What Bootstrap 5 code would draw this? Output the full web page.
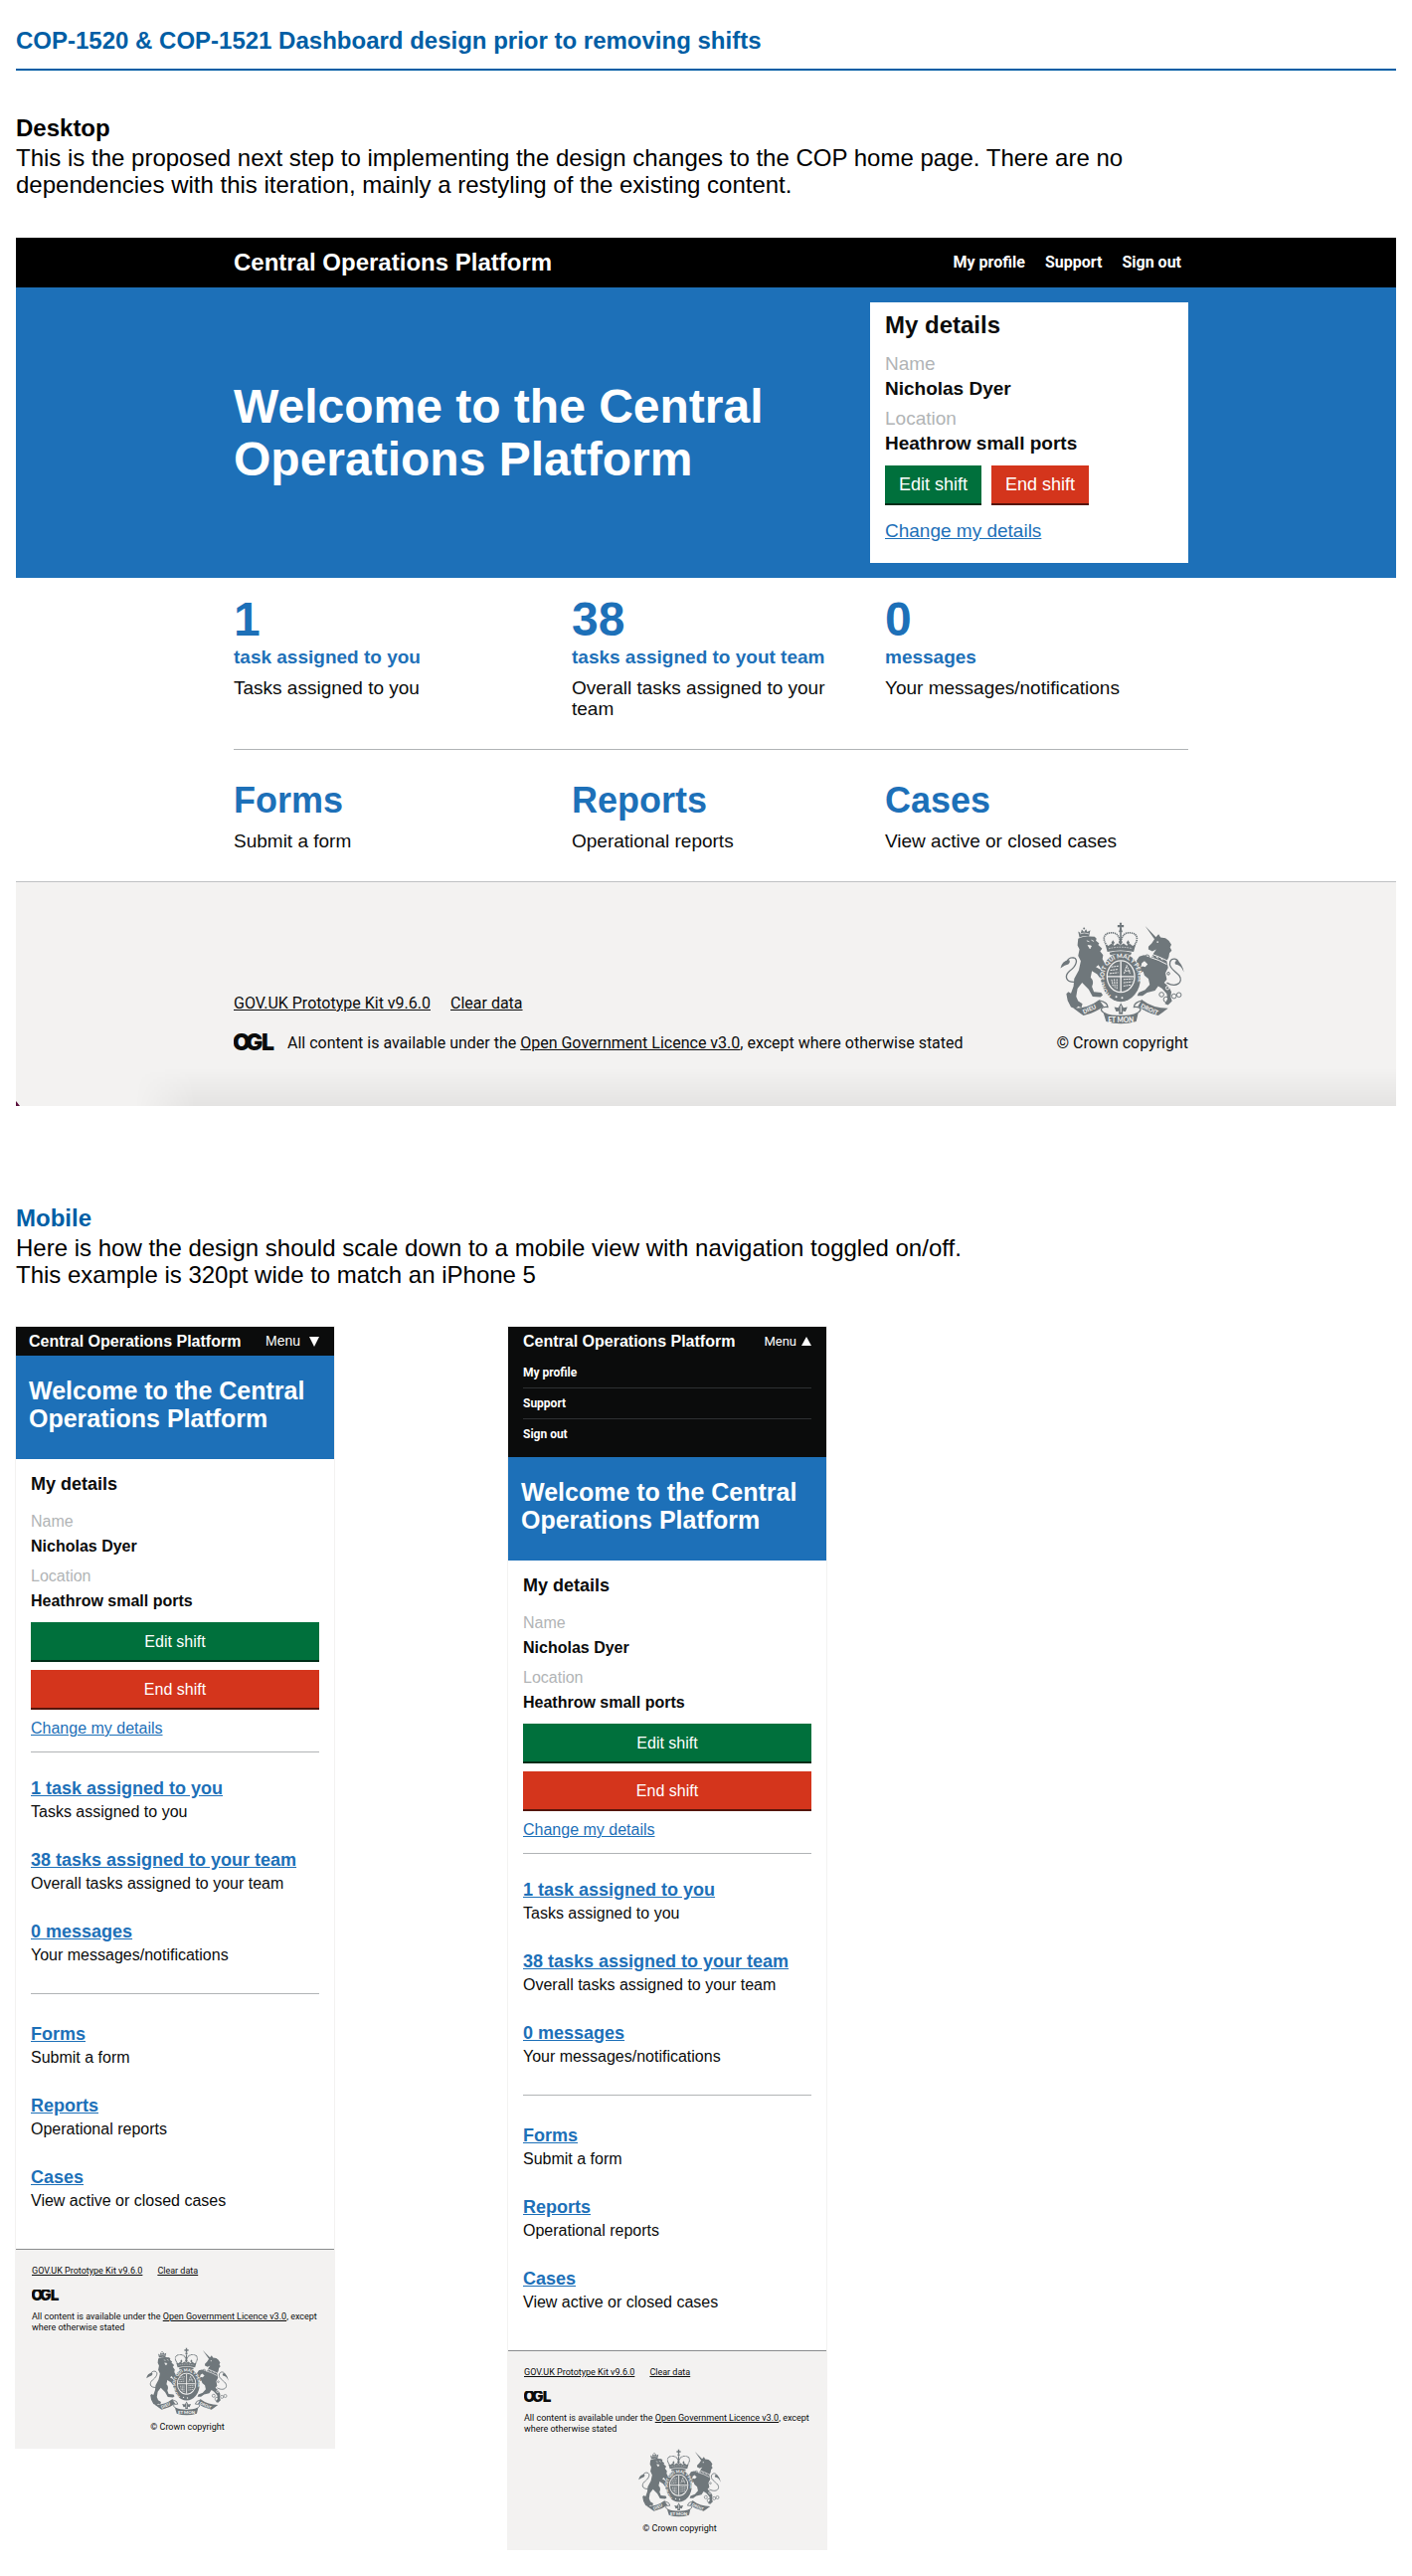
<!DOCTYPE html>
<html lang="en">
<head>
<meta charset="utf-8">
<meta name="viewport" content="width=device-width, initial-scale=1">
<title>Dashboard design</title>
<link href="https://cdn.jsdelivr.net/npm/bootstrap@5.3.0/dist/css/bootstrap.min.css" rel="stylesheet">
<style>
body{font-family:"Liberation Sans",Arial,sans-serif;color:#000;background:#fff}
h1,h2,h3,p,dl,dd,dt,ul{margin:0;font-weight:400}
.page{padding:25px 16px 26px}
.page-title,.sec-title{font-size:24px;line-height:32px;font-weight:700}
.page-title{color:#005ea5;padding-bottom:12px;border-bottom:2px solid #005ea5}
.brand-blue{color:#005ea5}
.intro{font-size:24px;line-height:27px;max-width:1200px}
.desk-sec{margin-top:42px}
.mob-sec{margin-top:97px}
a{color:#1d70b8}
.transport{font-family:Roboto,"Noto Sans",sans-serif}

/* desktop view */
.desk{margin-top:40px;color:#0b0c0c}
.desk-in{padding-left:10px}
.desk-wrap{max-width:960px;margin:0 auto}
.desk-head{background:#000;height:50px}
.desk-brand{font-size:24px;line-height:50px;font-weight:700;color:#fff;text-decoration:none}
.desk-nav{gap:20px;padding-right:7px;font-size:16px;font-weight:700;line-height:50px}
.desk-nav a,.mob-nav a{color:#fff;text-decoration:none}
.hero{background:#1d70b8;padding-top:15px;padding-bottom:15px}
.hero-h{font-size:48px;line-height:53px;font-weight:700;color:#fff}
.panel{background:#fff;width:320px;padding:8px 15px 20px}
.panel-h{font-size:24px;line-height:30px;font-weight:700;margin-bottom:11px}
.facts{font-size:19px;line-height:25px}
.facts dt{color:#b1b4b6}
.facts dd{font-weight:700}
.facts dd+dt{margin-top:5px}
.shift{border:0;border-bottom:2px solid;border-radius:0;height:40px;padding:0 14px;color:#fff;font-size:18px;line-height:38px;text-align:center}
.shift-edit{background:#00703c;border-color:#002d18}
.shift-end{background:#d4351c;border-color:#55150b}
.panel .acts{gap:10px;margin:10px 0 13px}
.change{font-size:19px;line-height:25px;display:block}
.tri{display:grid;grid-template-columns:340fr 315fr 305fr}
.tri>div{padding-right:30px}
.tri a{text-decoration:none;font-weight:700;display:block}
.stats{padding:16px 0 30px;border-bottom:1px solid #b1b4b6}
.big{font-size:48px;line-height:52px;display:block}
.lbl{font-size:19px;line-height:24px;display:block}
.desc{font-size:19px;line-height:21px}
.stats .desc{margin-top:8px}
.areas{padding:31px 0 30px}
.areas a{font-size:36px;line-height:40px}
.areas .desc{margin-top:10px}
.foot{background:#f3f2f1;border-top:1px solid #bfc1c3;position:relative}
.foot a{color:#0b0c0c}
.desk-foot{padding-top:40px;padding-bottom:53px;font-size:16px;line-height:20px}
.desk-foot::after{content:"";position:absolute;left:120px;right:0;bottom:0;height:38px;background:linear-gradient(to top,rgba(0,0,0,.06),transparent);-webkit-mask-image:linear-gradient(to right,transparent,#000 60px);mask-image:linear-gradient(to right,transparent,#000 60px)}
.desk-foot .metas{gap:20px;margin-bottom:20px}
.licence{gap:12px}
.ogl{display:block;flex:none}
.desk-foot .ogl{width:42px;height:18px}
.crest{display:block}
.desk-foot .crest{width:125px;height:103px;margin:0 auto 9px}
.speck{position:absolute;left:0;bottom:0;width:4px;height:5px;background:#5a0f3c;clip-path:polygon(0 0,100% 100%,0 100%)}

/* mobile views */
.phones{gap:173px;margin-top:38px}
.phone{width:322px;border:1px solid #f3f2f1;color:#0b0c0c;margin-left:-1px}
.phone+.phone{margin-left:0}
.mob-head{background:#0b0c0c;color:#fff}
.mob-bar{height:29px}
.mob-brand{font-size:16px;line-height:29px;font-weight:700;color:#fff;text-decoration:none}
.menu-btn{background:none;border:0;color:#fff;padding:0;font-size:14px;line-height:29px;display:flex;align-items:center}
.head-shut{padding:0 15px 0 13px}
.head-shut .menu-btn{gap:9px}
.head-open{padding:0 15px 8px}
.head-open .menu-btn{gap:5px;font-size:13px}
.mob-nav{padding-top:2px;font-size:12px;line-height:30px;font-weight:700}
.mob-nav li+li{border-top:1px solid #2e3133}
.mob-hero{background:#1d70b8;color:#fff;padding:21px 13px 27px}
.mob-hero-h{font-size:25px;line-height:28px;font-weight:700}
.mob-body{padding:12px 15px 36px}
.mob-h{font-size:18px;line-height:26px;font-weight:700;margin-bottom:12px}
.mob-body .facts,.mob-body .change,.mob-body .shift{font-size:16px}
.mob-body .shift{padding-top:1px;line-height:37px}
.mob-body .acts{gap:8px;margin:9px 0 6px}
.links{margin-top:11px;border-top:1px solid #b1b4b6;padding-top:24px;font-size:16px;line-height:24px}
.links li+li{margin-top:24px}
.links a{font-size:18px;line-height:24px;font-weight:700;display:inline-block;vertical-align:top}
.links+.links{margin-top:26px;padding-top:28px}
.mob-foot{padding:16px 14px 15px 16px;font-size:9px;line-height:11px;border-top-color:#8a8c8e}
.mob-foot .metas{gap:15px;margin-bottom:13px}
.mob-foot .ogl{width:28px;height:12px;margin-bottom:10px}
.mob-foot .crown{padding-left:23px;margin-top:14px}
.mob-foot .crest{width:83px;height:69px;margin:0 auto 6px}
</style>
<script src="https://cdn.jsdelivr.net/npm/bootstrap@5.3.0/dist/js/bootstrap.bundle.min.js"></script>
</head>
<body>
<svg width="0" height="0" class="position-absolute" aria-hidden="true">
<defs>
<symbol id="ogl" viewBox="0 0 42 18">
<text x="-1 12 28" y="17" font-family="Inter,sans-serif" font-weight="900" font-size="23" fill="#0b0c0c">OGL</text>
</symbol>
<symbol id="arms" viewBox="79 77 378 312">
<g fill="#6f777b" stroke="none">
<!-- crown -->
<path d="M260 79h7l-1 7h7v7h-7l1 8h-7l1-8h-7v-7h7z"/><circle cx="263.500" cy="105" r="5"/>
<path d="M222 150C206 128 212 112 232 110C248 108 260 116 263 142C267 116 278 108 294 110C314 112 320 128 304 150" fill="none" stroke="#6f777b" stroke-width="5" stroke-dasharray="4 2"/>
<path d="M261 110h5v34h-5z"/>
<path d="M240 132l5 8-5 8-5-8zM286 132l5 8-5 8-5-8zM263 128l6 10-6 10-6-10z"/>
<path d="M217 146L226 150L235 143L244 149L254 142L263 148L272 142L282 149L291 143L300 150L309 146L303 168Q263 158 223 168Z"/>
<path d="M227 158Q263 149 299 158" fill="none" stroke="#f3f2f1" stroke-width="2" stroke-dasharray="5 3"/>
<path d="M229 170Q263 161 297 170L294 178Q263 170 232 178Z"/>
<!-- garter and shield -->
<ellipse cx="264" cy="246" rx="60" ry="74"/>
<ellipse cx="264" cy="243" rx="44" ry="50" fill="#f3f2f1"/>
<ellipse cx="264" cy="243" rx="40" ry="46"/>
<path d="M264 197v92M224 243h80" stroke="#f3f2f1" stroke-width="4"/>
<path d="M235 214l22-3M232 224l24-3M230 234l26-3M272 252l28-2M272 262l26-3M272 272l22-3M236 252l4 20M244 251l2 27M252 251v30M274 234l8-25 10 25M278 226h14" fill="none" stroke="#f3f2f1" stroke-width="3" stroke-dasharray="6 2"/>
<circle cx="250" cy="305" r="3" fill="#f3f2f1"/><circle cx="268" cy="308" r="3" fill="#f3f2f1"/>
<!-- lion -->
<path d="M134 106l8 5 3-11 7 7 6-8 4 8 9-5-4 20Q152 118 138 124Z"/><circle cx="152" cy="97" r="3"/>
<path d="M139 113Q152 108 167 113" fill="none" stroke="#f3f2f1" stroke-width="2"/>
<path d="M134 128Q150 119 184 122L190 128L188 134L198 142L195 147L207 158L201 166L210 178L208 190L216 204L212 214L219 226L206 224L196 208L188 214L202 222L214 238L216 256L206 262L202 250L192 236L176 226L172 246Q184 258 176 274L182 290L204 292L209 300L202 306L178 304L166 282L146 262L132 280L128 304L134 318L147 326L144 338L134 334L126 342L112 336L102 316L98 296L104 290L112 294L120 272L122 250L136 224L142 196L134 180L138 160L132 148Z"/>
<path d="M160 134l8 3M174 132l8 4M164 148l10 2-4 8z" stroke="#f3f2f1" stroke-width="2.500" fill="#f3f2f1"/>
<path d="M126 260C94 262 92 240 108 226C128 212 136 190 120 186C110 184 102 190 100 198" fill="none" stroke="#6f777b" stroke-width="4"/>
<path d="M80 218Q84 196 106 192Q112 198 104 206Q94 208 80 218Z"/>
<!-- unicorn -->
<path d="M338 89L374 126L367 130Z"/>
<path d="M370 124L379 114L385 124L400 126L410 134L418 146L414 154L419 164L412 172L410 184L404 196L408 216L400 232L404 252L396 262L410 274L418 290L416 306L420 318L408 330L398 326L406 312L404 296L390 280L378 272L368 286L344 292L330 302L314 302L318 292L338 284L352 268L348 250L336 240L332 228L322 232L320 218L330 212L338 214L346 206L336 196L328 202L324 218L314 210L312 194L320 182L334 178L356 186L364 172L372 160L360 166L348 160L348 152L358 142Z"/>
<path d="M356 174Q380 182 408 196M352 184Q380 192 404 206" fill="none" stroke="#f3f2f1" stroke-width="3"/>
<path d="M358 180l6 4M372 183l6 4M386 188l6 4" stroke="#f3f2f1" stroke-width="3"/>
<circle cx="376" cy="138" r="2.500" fill="#f3f2f1"/>
<path d="M404 262C432 278 456 262 442 240C430 226 408 216 414 198C420 184 438 188 440 202" fill="none" stroke="#6f777b" stroke-width="4"/>
<path d="M456 230Q448 208 430 206Q426 196 436 194Q452 204 456 230Z"/>
<g fill="none" stroke="#6f777b" stroke-width="3"><circle cx="344" cy="184" r="7"/><circle cx="388" cy="298" r="7"/><circle cx="402" cy="313" r="8"/><circle cx="426" cy="303" r="7"/><circle cx="441" cy="299" r="7"/><circle cx="409" cy="234" r="4"/><circle cx="406" cy="278" r="5" stroke="#f3f2f1"/></g>
<!-- ribbons -->
<path d="M120 340Q166 340 198 314L212 334Q186 354 150 362Q136 352 120 340Z"/>
<path d="M408 340Q362 340 328 314L316 334Q342 354 378 362Q392 352 408 340Z"/>
<path d="M198 316Q224 322 224 336Q206 334 204 344Q206 352 222 358M330 316Q304 322 304 336Q322 334 324 344Q322 352 306 358" fill="none" stroke="#6f777b" stroke-width="4"/>
<path d="M211 354Q263 370 317 354L311 380Q263 394 219 380Z"/>
<path d="M264 324L272 338L284 336L278 350L270 348L270 358H258L258 348L250 350L244 336L256 338Z"/>
<path d="M264 332v20" stroke="#f3f2f1" stroke-width="3"/>
</g>
<g fill="#f3f2f1" font-family="Lato,sans-serif" font-weight="900">
<path id="garter" d="M236 302A52 63 0 1 1 296 300" fill="none"/>
<text font-size="18"><textPath href="#garter" startOffset="2">HONI SOIT QUI MAL Y PENSE</textPath></text>
<text font-size="18" transform="translate(151 357) rotate(-24)">DIEU</text>
<text font-size="18" transform="translate(323 337) rotate(24)">DROIT</text>
<text x="264" y="382" font-size="20" text-anchor="middle">ET MON</text>
</g>
</symbol>
</defs>
</svg>

<div class="page">
<header><h1 class="page-title">COP-1520 &amp; COP-1521 Dashboard design prior to removing shifts</h1></header>

<section class="desk-sec">
<h2 class="sec-title">Desktop</h2>
<p class="intro">This is the proposed next step to implementing the design changes to the COP home page. There are no dependencies with this iteration, mainly a restyling of the existing content.</p>

<div class="desk">
 <div class="desk-in desk-head"><div class="desk-wrap d-flex justify-content-between">
  <a class="desk-brand" href="#">Central Operations Platform</a>
  <nav class="desk-nav transport d-flex" aria-label="Account"><a href="#">My profile</a><a href="#">Support</a><a href="#">Sign out</a></nav>
 </div></div>
 <div class="desk-in hero"><div class="desk-wrap d-flex justify-content-between align-items-center">
  <h3 class="hero-h">Welcome to the Central<br>Operations Platform</h3>
  <div class="panel">
   <h4 class="panel-h">My details</h4>
   <dl class="facts"><dt>Name</dt><dd>Nicholas Dyer</dd><dt>Location</dt><dd>Heathrow small ports</dd></dl>
   <div class="acts d-flex"><button type="button" class="shift shift-edit">Edit shift</button><button type="button" class="shift shift-end">End shift</button></div>
   <a class="change" href="#">Change my details</a>
  </div>
 </div></div>
 <div class="desk-in"><div class="desk-wrap">
  <div class="tri stats">
   <div><a href="#"><span class="big">1</span><span class="lbl">task assigned to you</span></a><p class="desc">Tasks assigned to you</p></div>
   <div><a href="#"><span class="big">38</span><span class="lbl">tasks assigned to yout team</span></a><p class="desc">Overall tasks assigned to your team</p></div>
   <div><a href="#"><span class="big">0</span><span class="lbl">messages</span></a><p class="desc">Your messages/notifications</p></div>
  </div>
  <div class="tri areas">
   <div><a href="#">Forms</a><p class="desc">Submit a form</p></div>
   <div><a href="#">Reports</a><p class="desc">Operational reports</p></div>
   <div><a href="#">Cases</a><p class="desc">View active or closed cases</p></div>
  </div>
 </div></div>
 <footer class="desk-in foot desk-foot transport"><div class="desk-wrap d-flex justify-content-between align-items-end">
  <div>
   <div class="metas d-flex"><a href="#">GOV.UK Prototype Kit v9.6.0</a><a href="#">Clear data</a></div>
   <div class="licence d-flex"><svg class="ogl" role="img" aria-label="OGL"><use href="#ogl"/></svg><span>All content is available under the <a href="#">Open Government Licence v3.0</a>, except where otherwise stated</span></div>
  </div>
  <div class="text-center"><svg class="crest" role="img" aria-label="Royal coat of arms"><use href="#arms"/></svg>© Crown copyright</div>
 </div><span class="speck"></span></footer>
</div>
</section>

<section class="mob-sec">
<h2 class="sec-title brand-blue">Mobile</h2>
<p class="intro">Here is how the design should scale down to a mobile view with navigation toggled on/off.<br>This example is 320pt wide to match an iPhone 5</p>

<div class="phones d-flex flex-wrap align-items-start">
 <div class="phone">
  <div class="mob-head head-shut"><div class="mob-bar d-flex justify-content-between">
   <a class="mob-brand" href="#">Central Operations Platform</a>
   <button type="button" class="menu-btn" aria-expanded="false">Menu <svg width="10" height="10" viewBox="0 0 10 10" aria-hidden="true"><path d="M0 0h10L5 10z" fill="#fff"/></svg></button>
  </div></div>
  <div class="mob-hero"><h3 class="mob-hero-h">Welcome to the Central<br>Operations Platform</h3></div>
  <div class="mob-body">
   <h4 class="mob-h">My details</h4>
   <dl class="facts"><dt>Name</dt><dd>Nicholas Dyer</dd><dt>Location</dt><dd>Heathrow small ports</dd></dl>
   <div class="acts d-grid"><button type="button" class="shift shift-edit">Edit shift</button><button type="button" class="shift shift-end">End shift</button></div>
   <a class="change" href="#">Change my details</a>
   <ul class="links list-unstyled"><li><a href="#">1 task assigned to you</a><p>Tasks assigned to you</p></li><li><a href="#">38 tasks assigned to your team</a><p>Overall tasks assigned to your team</p></li><li><a href="#">0 messages</a><p>Your messages/notifications</p></li></ul>
   <ul class="links list-unstyled"><li><a href="#">Forms</a><p>Submit a form</p></li><li><a href="#">Reports</a><p>Operational reports</p></li><li><a href="#">Cases</a><p>View active or closed cases</p></li></ul>
  </div>
  <footer class="foot mob-foot transport">
   <div class="metas d-flex"><a href="#">GOV.UK Prototype Kit v9.6.0</a><a href="#">Clear data</a></div>
   <svg class="ogl" role="img" aria-label="OGL"><use href="#ogl"/></svg>
   <p>All content is available under the <a href="#">Open Government Licence v3.0</a>, except where otherwise stated</p>
   <div class="crown text-center"><svg class="crest" role="img" aria-label="Royal coat of arms"><use href="#arms"/></svg>© Crown copyright</div>
  </footer>
 </div>

 <div class="phone">
  <div class="mob-head head-open"><div class="mob-bar d-flex justify-content-between">
   <a class="mob-brand" href="#">Central Operations Platform</a>
   <button type="button" class="menu-btn transport" aria-expanded="true">Menu <svg width="10" height="9" viewBox="0 0 10 9" aria-hidden="true"><path d="M0 9h10L5 0z" fill="#fff"/></svg></button>
  </div>
  <nav aria-label="Menu"><ul class="mob-nav transport list-unstyled"><li><a href="#">My profile</a></li><li><a href="#">Support</a></li><li><a href="#">Sign out</a></li></ul></nav></div>
  <div class="mob-hero"><h3 class="mob-hero-h">Welcome to the Central<br>Operations Platform</h3></div>
  <div class="mob-body">
   <h4 class="mob-h">My details</h4>
   <dl class="facts"><dt>Name</dt><dd>Nicholas Dyer</dd><dt>Location</dt><dd>Heathrow small ports</dd></dl>
   <div class="acts d-grid"><button type="button" class="shift shift-edit">Edit shift</button><button type="button" class="shift shift-end">End shift</button></div>
   <a class="change" href="#">Change my details</a>
   <ul class="links list-unstyled"><li><a href="#">1 task assigned to you</a><p>Tasks assigned to you</p></li><li><a href="#">38 tasks assigned to your team</a><p>Overall tasks assigned to your team</p></li><li><a href="#">0 messages</a><p>Your messages/notifications</p></li></ul>
   <ul class="links list-unstyled"><li><a href="#">Forms</a><p>Submit a form</p></li><li><a href="#">Reports</a><p>Operational reports</p></li><li><a href="#">Cases</a><p>View active or closed cases</p></li></ul>
  </div>
  <footer class="foot mob-foot transport">
   <div class="metas d-flex"><a href="#">GOV.UK Prototype Kit v9.6.0</a><a href="#">Clear data</a></div>
   <svg class="ogl" role="img" aria-label="OGL"><use href="#ogl"/></svg>
   <p>All content is available under the <a href="#">Open Government Licence v3.0</a>, except where otherwise stated</p>
   <div class="crown text-center"><svg class="crest" role="img" aria-label="Royal coat of arms"><use href="#arms"/></svg>© Crown copyright</div>
  </footer>
 </div>
</div>
</section>
</div>
</body>
</html>
